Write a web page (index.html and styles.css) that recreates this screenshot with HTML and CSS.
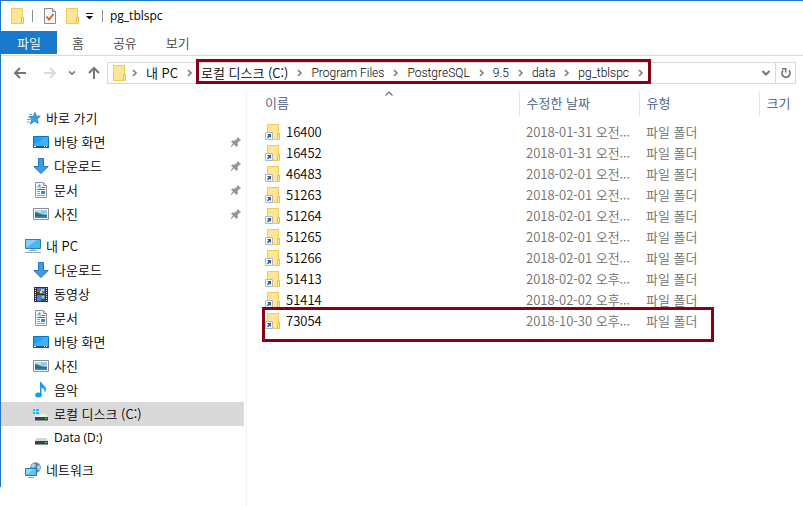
FILE: index.html
```html
<!DOCTYPE html>
<html lang="ko">
<head>
<meta charset="utf-8">
<title>pg_tblspc</title>
<link rel="stylesheet" href="styles.css">
</head>
<body>
<svg class="sprite" aria-hidden="true">
  <symbol id="folder" viewBox="0 0 16 16">
    <path d="M2.500.5h11v9h1v6h-12z" fill="#ffe596" stroke="#eecb55"/>
    <path d="M12.500 15V9.500h2V15" fill="#ffefb5" stroke="#e8bd3c"/>
  </symbol>
  <symbol id="link-folder" viewBox="0 0 16 16">
    <path d="M2.500.5h11v9h1v6h-12z" fill="#ffe596" stroke="#eecb55"/>
    <path d="M12.500 15V9.500h2V15" fill="#ffefb5" stroke="#e8bd3c"/>
    <path d="M.5 8.500h7v7h-7z" fill="#fff" stroke="#b4b6ba"/>
    <path d="M2 10h4v4l-1.300-1.300L3 14.500 2 13.300l1.500-1.800z" fill="#2b5f9e"/>
  </symbol>
  <symbol id="check-doc" viewBox="0 0 16 16">
    <path d="M2.500.5h8l3 3v12h-11z" fill="#f8f8f8" stroke="#8b8b8b"/>
    <path d="M10.500.5v3h3" fill="#ddd" stroke="#8b8b8b"/>
    <path d="M4.500 8.500l2.500 3 4.500-5.500" fill="none" stroke="#e65426" stroke-width="1.800"/>
  </symbol>
  <symbol id="more" viewBox="0 0 8 8"><path d="M0 1h7v1H0zM0 4h7L3.500 7.500z" fill="#111"/></symbol>
  <symbol id="arrow" viewBox="0 0 14 14"><path d="M13 7H2M7 2L2 7l5 5" fill="none" stroke="currentColor" stroke-width="2"/></symbol>
  <symbol id="arrow-up" viewBox="0 0 14 14"><path d="M7 13V2M2 7l5-5 5 5" fill="none" stroke="currentColor" stroke-width="2"/></symbol>
  <symbol id="chev-down" viewBox="0 0 10 8"><path d="M1.500 2L5 5.500 8.500 2" fill="none" stroke="currentColor" stroke-width="2"/></symbol>
  <symbol id="chev-right" viewBox="0 0 6 8"><path d="M1 1.200L4 4 1 6.800" fill="none" stroke="#808080" stroke-width="1.600"/></symbol>
  <symbol id="refresh" viewBox="0 0 12 12"><path d="M3 3.500a4 4 0 1 0 6 0" fill="none" stroke="#6d6d6d" stroke-width="1.700"/><path d="M2 1.700h3.700v3.800" fill="none" stroke="#6d6d6d" stroke-width="1.500"/></symbol>
  <symbol id="sort" viewBox="0 0 8 5"><path d="M.5 4.500L4 1l3.500 3.500" fill="none" stroke="#6d6d6d" stroke-width="1.200"/></symbol>
  <symbol id="pin" viewBox="0 0 12 12"><path d="M7 1l4 3-1 1H9L7.500 7.500l.5 2L6.500 11 4 8.500 1 11l-.5-.5L3 7.500 1 5.500l1.500-1 2 .2L7 3z" fill="#8c979e"/></symbol>
  <symbol id="star" viewBox="0 0 16 16">
    <path d="M10 2.500l1.300 3.700h4L12 9l1.200 4.500-3.700-2.300L5.500 14l1.400-4.800L4 6.500h4.300z" fill="#33a5ee" stroke="#1379c0" stroke-width=".8"/>
    <path d="M4 4.500h3M3 7h2M2 9.500h4M2 12h3" stroke="#5aaee0"/>
  </symbol>
  <symbol id="desktop" viewBox="0 0 16 16">
    <path d="M.5 2.500h15v11H.5z" fill="#1ea0fb" stroke="#0d74bd"/>
    <path d="M1 11L12 3h3v9H1z" fill="#3cb0ff"/>
    <path d="M0 12h16v2H0z" fill="#075c9b"/>
    <path d="M1 12.500h2M11 12.500h1M13 12.500h1" stroke="#fff"/>
  </symbol>
  <symbol id="download" viewBox="0 0 16 16"><path d="M5.500.5h5v8h4.700L8 15.500.8 8.500h4.700z" fill="#3d9be9" stroke="#2277bd"/></symbol>
  <symbol id="document" viewBox="0 0 16 16">
    <path d="M2.500.5h8l3 3v12h-11z" fill="#fff" stroke="#909090"/>
    <path d="M10.500.5v3h3" fill="#eee" stroke="#909090"/>
    <path d="M4.500 5.500l2-3M7 2.500v4M4 7.500h8M8.500 5.500H12" stroke="#1687ce"/>
    <path d="M4 9.500h3M4 11.500h3M4 13.500h8" stroke="#999"/>
    <path d="M8 9h4v3H8z" fill="#2d90cc"/>
  </symbol>
  <symbol id="picture" viewBox="0 0 16 16">
    <path d="M.5 2.500h15v11H.5z" fill="#fff" stroke="#8f8f8f"/>
    <path d="M2 4h12v8H2z" fill="#9acbea"/>
    <path d="M2 6c3 0 4 3 12 3v1H2z" fill="#356a67"/>
    <path d="M2 10h12v2H2z" fill="#357fb9"/>
    <path d="M3 5h5" stroke="#e7f5fd"/>
  </symbol>
  <symbol id="pc" viewBox="0 0 16 16">
    <path d="M.5 1.500h15v9H.5z" fill="#48b5f5" stroke="#277fac"/>
    <path d="M1 10V2h11z" fill="#85d1fc"/>
    <path d="M6 11h4v1.500H6z" fill="#b6c4cc"/>
    <path d="M4 12.500h8M0 14.500h16" stroke="#96a5ae"/>
  </symbol>
  <symbol id="video" viewBox="0 0 16 16">
    <path d="M1 1h14v15H1z" fill="#303030"/>
    <path d="M2.500 2v13M13.500 2v13" stroke="#e4e4e4" stroke-dasharray="1 1"/>
    <path d="M4 2h8v6H4z" fill="#4978c9"/>
    <path d="M4 9h8v6H4z" fill="#3e8ae2"/>
    <path d="M4 6h3v2H4zM8 13h4v2H8z" fill="#345d33"/>
    <path d="M8 3h3v2H8zM9 10h2v2H9z" fill="#eec83c"/>
    <path d="M5 3h2v2H5z" fill="#bd4e62"/><path d="M7 5h2v2H7z" fill="#ece370"/>
  </symbol>
  <symbol id="music" viewBox="0 0 16 16">
    <path d="M7 0h1.500c.3 3 4.500 4 4.500 7 0 1.500-.5 2.500-1.500 3.500.6-3-1-4.300-3-5V13H7z" fill="#119ced"/>
    <ellipse cx="5.500" cy="13" rx="3.300" ry="2.500" fill="#119ced"/>
  </symbol>
  <symbol id="drive" viewBox="0 0 16 16">
    <path d="M4 8h9l2 3H2z" fill="#d3d5d6"/>
    <path d="M2 11h13v4H2z" fill="#3f4244"/>
    <path d="M2 14.500h13" stroke="#8d9092"/>
    <path d="M12 12.500h2" stroke="#39e63e"/>
  </symbol>
  <symbol id="system-drive" viewBox="0 0 16 16">
    <path d="M7 8h6l2 3H2l1-2h4z" fill="#efefef"/>
    <path d="M2 11h13v4H2z" fill="#3f4244"/>
    <path d="M2 14.500h13" stroke="#8d9092"/>
    <path d="M12 12.500h2" stroke="#39e63e"/>
    <path d="M0 3h2v2H0zM3 3h3v2H3zM0 6h2v2H0zM3 6h3v2H3z" fill="#13bdf3"/>
  </symbol>
  <symbol id="network" viewBox="0 0 16 16">
    <circle cx="10.500" cy="5.500" r="5.300" fill="#4f8caf"/>
    <path d="M7 2c2-1 3 0 4 1L9 6 6 5zM12 4l3-1v4l-2 2z" fill="#a9d2df"/>
    <path d="M.5 6.500h11v7H.5z" fill="#5fc1fa" stroke="#27799f"/>
    <path d="M1 13V7h8z" fill="#93d8ff"/>
    <path d="M3 15.500h6" stroke="#98a7af"/>
  </symbol>
</svg>

<div class="window">
  <header class="titlebar">
    <svg class="icon"><use href="#folder"/></svg>
    <span class="bar"></span>
    <button class="tool" aria-label="속성"><svg class="icon"><use href="#check-doc"/></svg></button>
    <button class="tool" aria-label="새 폴더"><svg class="icon"><use href="#folder"/></svg></button>
    <button class="tool more" aria-label="빠른 실행 도구 모음 사용자 지정"><svg><use href="#more"/></svg></button>
    <span class="bar"></span>
    <h1>pg_tblspc</h1>
  </header>

  <nav class="ribbon">
    <button class="file">파일</button><button>홈</button><button>공유</button><button>보기</button>
  </nav>

  <div class="address-row">
    <div class="history">
      <button aria-label="뒤로"><svg class="arrow"><use href="#arrow"/></svg></button>
      <button aria-label="앞으로" disabled><svg class="arrow forward"><use href="#arrow"/></svg></button>
      <button class="recent" aria-label="최근 위치"><svg class="down"><use href="#chev-down"/></svg></button>
      <button class="up" aria-label="위로"><svg class="arrow"><use href="#arrow-up"/></svg></button>
    </div>
    <div class="address">
      <svg class="icon"><use href="#folder"/></svg>
      <svg class="sep"><use href="#chev-right"/></svg>
      <a href="#">내 PC</a>
      <svg class="sep"><use href="#chev-right"/></svg>
      <div class="marked">
        <a href="#">로컬 디스크 (C:)</a>
        <svg class="sep"><use href="#chev-right"/></svg>
        <a class="crumb" href="#">Program Files</a>
        <svg class="sep"><use href="#chev-right"/></svg>
        <a class="crumb" href="#">PostgreSQL</a>
        <svg class="sep"><use href="#chev-right"/></svg>
        <a class="crumb" href="#">9.5</a>
        <svg class="sep"><use href="#chev-right"/></svg>
        <a class="crumb" href="#">data</a>
        <svg class="sep"><use href="#chev-right"/></svg>
        <a class="crumb" href="#">pg_tblspc</a>
        <svg class="sep"><use href="#chev-right"/></svg>
      </div>
      <button class="drop" aria-label="이전 위치"><svg class="down"><use href="#chev-down"/></svg></button>
      <button class="refresh" aria-label="새로 고침"><svg><use href="#refresh"/></svg></button>
    </div>
  </div>

  <div class="content">
    <nav class="tree">
      <section>
        <a class="root" href="#"><svg class="icon"><use href="#star"/></svg>바로 가기</a>
        <a href="#"><svg class="icon"><use href="#desktop"/></svg>바탕 화면<svg class="pin"><use href="#pin"/></svg></a>
        <a href="#"><svg class="icon"><use href="#download"/></svg>다운로드<svg class="pin"><use href="#pin"/></svg></a>
        <a href="#"><svg class="icon"><use href="#document"/></svg>문서<svg class="pin"><use href="#pin"/></svg></a>
        <a href="#"><svg class="icon"><use href="#picture"/></svg>사진<svg class="pin"><use href="#pin"/></svg></a>
      </section>
      <section>
        <a class="root" href="#"><svg class="icon"><use href="#pc"/></svg>내 PC</a>
        <a href="#"><svg class="icon"><use href="#download"/></svg>다운로드</a>
        <a href="#"><svg class="icon"><use href="#video"/></svg>동영상</a>
        <a href="#"><svg class="icon"><use href="#document"/></svg>문서</a>
        <a href="#"><svg class="icon"><use href="#desktop"/></svg>바탕 화면</a>
        <a href="#"><svg class="icon"><use href="#picture"/></svg>사진</a>
        <a href="#"><svg class="icon"><use href="#music"/></svg>음악</a>
        <a class="selected" href="#"><svg class="icon"><use href="#system-drive"/></svg>로컬 디스크 (C:)</a>
        <a class="latin" href="#"><svg class="icon"><use href="#drive"/></svg>Data (D:)</a>
      </section>
      <section>
        <a class="root" href="#"><svg class="icon"><use href="#network"/></svg>네트워크</a>
      </section>
    </nav>

    <main>
      <table>
        <colgroup><col class="c-name"><col class="c-date"><col class="c-type"><col></colgroup>
        <thead>
          <tr><th>이름<svg class="sort"><use href="#sort"/></svg></th><th>수정한 날짜</th><th>유형</th><th>크기</th></tr>
        </thead>
        <tbody>
          <tr><td><svg class="icon"><use href="#link-folder"/></svg>16400</td><td>2018-01-31 오전...</td><td>파일 폴더</td><td></td></tr>
          <tr><td><svg class="icon"><use href="#link-folder"/></svg>16452</td><td>2018-01-31 오전...</td><td>파일 폴더</td><td></td></tr>
          <tr><td><svg class="icon"><use href="#link-folder"/></svg>46483</td><td>2018-02-01 오전...</td><td>파일 폴더</td><td></td></tr>
          <tr><td><svg class="icon"><use href="#link-folder"/></svg>51263</td><td>2018-02-01 오전...</td><td>파일 폴더</td><td></td></tr>
          <tr><td><svg class="icon"><use href="#link-folder"/></svg>51264</td><td>2018-02-01 오전...</td><td>파일 폴더</td><td></td></tr>
          <tr><td><svg class="icon"><use href="#link-folder"/></svg>51265</td><td>2018-02-01 오전...</td><td>파일 폴더</td><td></td></tr>
          <tr><td><svg class="icon"><use href="#link-folder"/></svg>51266</td><td>2018-02-01 오전...</td><td>파일 폴더</td><td></td></tr>
          <tr><td><svg class="icon"><use href="#link-folder"/></svg>51413</td><td>2018-02-02 오후...</td><td>파일 폴더</td><td></td></tr>
          <tr><td><svg class="icon"><use href="#link-folder"/></svg>51414</td><td>2018-02-02 오후...</td><td>파일 폴더</td><td></td></tr>
          <tr class="highlight"><td><svg class="icon"><use href="#link-folder"/></svg>73054</td><td>2018-10-30 오후...</td><td>파일 폴더</td><td></td></tr>
        </tbody>
      </table>
    </main>
  </div>
</div>
</body>
</html>
```
FILE: styles.css
```css
*, *::before, *::after { box-sizing: border-box; }

body {
  margin: 0;
  background: #fff;
  color: #000;
  font: 350 13px/20px "Noto Sans CJK KR", sans-serif;
}

.sprite { position: absolute; width: 0; height: 0; }
svg { display: block; flex: none; }
a { color: inherit; text-decoration: none; white-space: nowrap; }
button {
  padding: 0;
  border: 0;
  background: none;
  color: inherit;
  font: inherit;
}

.icon { width: 16px; height: 16px; }
.latin, h1 { font-family: "Open Sans", "Noto Sans", sans-serif; font-size: 12px; font-weight: 400; }
.crumb { font-family: Roboto, sans-serif; font-size: 12px; }

.window {
  display: flex;
  flex-direction: column;
  min-height: 100vh;
  border-top: 1px solid #1979ca;
  background: linear-gradient(#1979ca, #1979ca) 0 0 / 1px calc(100% - 19px) no-repeat;
  padding-left: 1px;
}

.titlebar {
  display: flex;
  align-items: center;
  height: 30px;
  padding-left: 8px;
}
.titlebar .bar { width: 1px; height: 12px; margin: 0 7px; background: #8f8f8f; }
.titlebar .tool { margin-left: 2px; margin-right: 4px; }
.titlebar .more { margin: 0 1px 0 2px; }
.more svg { width: 8px; height: 8px; }
h1 { margin: 0; }

.ribbon {
  display: flex;
  gap: 1px;
  height: 25px;
  border-bottom: 1px solid #dadbdc;
  color: #444;
}
.ribbon button { height: 23px; padding: 0 14px; }
.ribbon .file { padding: 0 16px; background: #1979ca; color: #fff; }

.address-row {
  display: flex;
  align-items: center;
  height: 34px;
  margin-bottom: 1px;
  padding: 0 7px 0 12px;
}
.history { display: flex; align-items: center; width: 94px; color: #757575; }
.history button { margin-right: 16px; }
.history button:nth-child(n+2) { margin-right: 11px; }
.arrow { width: 14px; height: 14px; }
.forward { transform: scaleX(-1); color: #dadada; }
.down { width: 10px; height: 8px; }
.recent .down { width: 8px; }

.address {
  display: flex;
  flex: 1;
  align-items: center;
  height: 22px;
  border: 1px solid #d9d9d9;
  padding-left: 3px;
}
.sep { width: 6px; height: 8px; margin: 0 8px 0 9px; }
.address > .icon + .sep { margin-left: 5px; }
.marked { position: relative; display: flex; align-items: center; }
.marked::after {
  content: "";
  position: absolute;
  inset: -4px 1px -1px -5px;
  border: 3px solid #880015;
}
.drop { margin-left: auto; padding: 0 4px; color: #757575; }
.refresh {
  display: grid;
  place-items: center;
  align-self: stretch;
  width: 20px;
  border-left: 1px solid #d9d9d9;
}
.refresh svg { width: 12px; height: 12px; }

.content { display: flex; flex: 1; }

.tree {
  width: 246px;
  padding: 15px 2px 0 0;
  border-right: 1px solid #f2f2f2;
}
.tree section { margin-bottom: 8px; }
.tree a {
  display: flex;
  align-items: center;
  gap: 5px;
  height: 24px;
  padding-left: 32px;
}
.tree .root { padding-left: 24px; }
.tree .selected { background: #d9d9d9; }
.pin { width: 12px; height: 12px; margin-left: auto; margin-right: 2px; }

main { flex: 1; min-width: 0; }
table { width: 100%; border-collapse: collapse; table-layout: fixed; }
.c-name { width: 272px; }
.c-date, .c-type { width: 120px; }
th, td {
  padding: 0 0 0 7px;
  font-weight: 350;
  text-align: left;
  white-space: nowrap;
}
th {
  position: relative;
  height: 25px;
  padding-bottom: 2px;
  border-right: 1px solid #e3e3e3;
  color: #43597a;
}
th:last-child { border-right: 0; }
th:first-child { padding-left: 18px; }
.sort { position: absolute; top: 0; left: 51%; width: 8px; height: 5px; }
tbody::before { content: ""; display: block; height: 5px; }
td { height: 21px; color: #6d6d6d; }
td:first-child {
  display: flex;
  align-items: center;
  gap: 5px;
  padding-left: 18px;
  color: #000;
}
.highlight td:first-child { position: relative; }
.highlight td:first-child::after {
  content: "";
  position: absolute;
  top: -3px;
  left: 15px;
  width: 452px;
  height: 35px;
  border: 3px solid #880015;
}
```
